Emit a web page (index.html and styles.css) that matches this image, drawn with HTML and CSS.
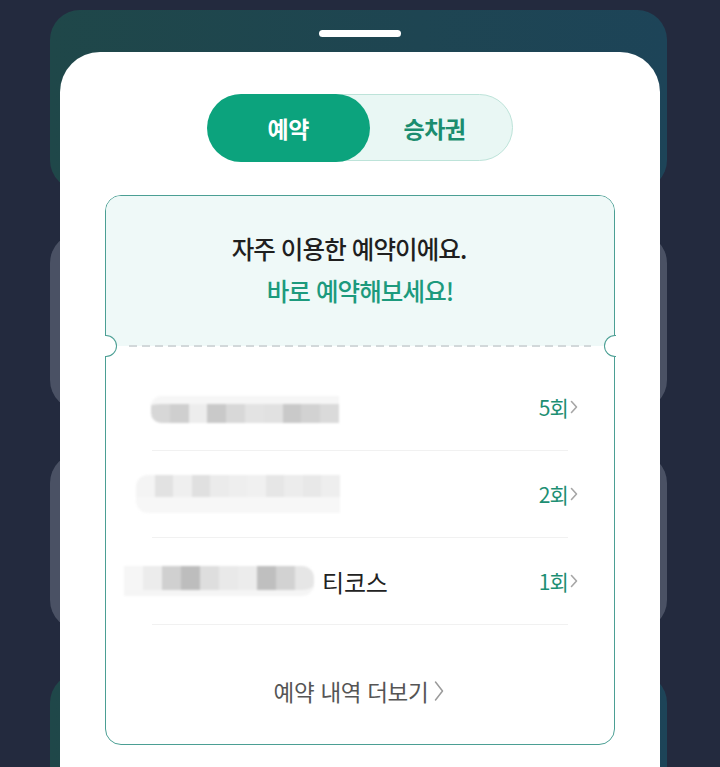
FILE: index.html
```html
<!DOCTYPE html>
<html lang="ko">
<head>
<meta charset="utf-8">
<title>자주 이용한 예약</title>
<link rel="stylesheet" href="styles.css">
</head>
<body>
<div class="screen">
  <div class="bg-list">
    <div class="bg-card teal"></div>
    <div class="bg-card grey"></div>
    <div class="bg-card grey"></div>
    <div class="bg-card teal tall"></div>
  </div>

  <div class="overlay">
    <div class="handle"></div>
    <div class="sheet">
      <div class="toggle">
        <div class="tab active">예약</div>
        <div class="tab">승차권</div>
      </div>

      <div class="ticket">
        <div class="ticket-head">
          <p class="head-1">자주 이용한 예약이에요.</p>
          <p class="head-2">바로 예약해보세요!</p>
          <div class="dash"></div>
        </div>
        <span class="notch left"></span>
        <span class="notch right"></span>

        <ul class="rows">
          <li class="row">
            <span class="name">
              <span class="mosaic m1" aria-hidden="true">
                <i class="c1"></i><i class="c2"></i><i class="c3"></i><i class="c4"></i><i class="c5"></i><i class="c6"></i><i class="c7"></i><i class="c8"></i><i class="c9"></i><i class="c10"></i>
              </span>
            </span>
            <span class="count">5회<svg class="chev" viewBox="0 0 8 14" width="8" height="14"><path d="M1.5 1.5 L6.5 7 L1.5 12.5"/></svg></span>
          </li>
          <li class="row">
            <span class="name">
              <span class="mosaic m2" aria-hidden="true">
                <i class="c1"></i><i class="c2"></i><i class="c3"></i><i class="c4"></i><i class="c5"></i><i class="c6"></i><i class="c7"></i><i class="c8"></i><i class="c9"></i><i class="c10"></i><i class="c11"></i>
              </span>
            </span>
            <span class="count">2회<svg class="chev" viewBox="0 0 8 14" width="8" height="14"><path d="M1.5 1.5 L6.5 7 L1.5 12.5"/></svg></span>
          </li>
          <li class="row">
            <span class="name">
              <span class="mosaic m3" aria-hidden="true">
                <i class="c1"></i><i class="c2"></i><i class="c3"></i><i class="c4"></i><i class="c5"></i><i class="c6"></i><i class="c7"></i><i class="c8"></i><i class="c9"></i><i class="c10"></i>
              </span>
              <span class="name-text">티코스</span>
            </span>
            <span class="count">1회<svg class="chev" viewBox="0 0 8 14" width="8" height="14"><path d="M1.5 1.5 L6.5 7 L1.5 12.5"/></svg></span>
          </li>
        </ul>

        <div class="more">예약 내역 더보기<svg class="chev big" viewBox="0 0 10 22" width="10" height="22"><path d="M1.5 2 L8.5 11 L1.5 20"/></svg></div>
      </div>
    </div>
  </div>
</div>
</body>
</html>
```

FILE: styles.css
```css
* { box-sizing: border-box; }
html, body { margin: 0; padding: 0; }
body {
  width: 720px;
  height: 767px;
  overflow: hidden;
  background: #232a3e;
  font-family: "Noto Sans CJK KR", "Noto Sans", sans-serif;
}
.screen {
  position: relative;
  width: 720px;
  height: 767px;
  overflow: hidden;
}

/* background list of cards */
.bg-list {
  display: flex;
  flex-direction: column;
  gap: 43px;
  padding: 10px 53px 0 50px;
}
.bg-card {
  height: 177px;
  border-radius: 30px;
}
.bg-card.teal {
  height: 180px;
  background: linear-gradient(90deg, #1f4749 0%, #1e4552 60%, #1d4458 100%);
}
.bg-card.grey { background: #4a5164; }
.bg-card.tall { height: 200px; }

/* bottom sheet overlay */
.overlay {
  position: absolute;
  top: 30px;
  left: 60px;
  width: 600px;
}
.handle {
  width: 82px;
  height: 7px;
  margin: 0 auto 15px;
  border-radius: 4px;
  background: #ffffff;
}
.sheet {
  height: 715px;
  background: #ffffff;
  border-radius: 40px 40px 0 0;
  padding-top: 42px;
}

/* toggle */
.toggle {
  display: grid;
  grid-template-columns: 161px 1fr;
  width: 305px;
  height: 67px;
  margin: 0 auto;
  border: 1.5px solid #bde3d9;
  border-radius: 34px;
  background: #e9f7f4;
}
.tab {
  display: flex;
  align-items: center;
  justify-content: center;
  font-size: 23px;
  font-weight: 700;
  color: #1b8d6f;
  padding-right: 12px;
  letter-spacing: -0.5px;
}
.tab.active {
  margin: -1.5px 0 -1.5px -1.5px;
  padding-right: 0;
  background: #0ca37d;
  color: #ffffff;
  border-radius: 34px;
}

/* ticket */
.ticket {
  position: relative;
  width: 510px;
  height: 550px;
  margin: 34px auto 0;
  border: 1.5px solid #4b9f94;
  border-radius: 16px;
}
.ticket-head {
  height: 149.5px;
  background: #eff9f8;
  border-radius: 15px 15px 0 0;
  padding-top: 32px;
  display: flex;
  flex-direction: column;
  align-items: center;
}
.ticket-head p {
  margin: 0;
  font-size: 24.5px;
  line-height: 42px;
  letter-spacing: -0.9px;
}
.head-1 { color: #1f1f1f; font-weight: 500; padding-right: 22px; }
.head-2 { color: #1c9a7d; font-weight: 500; }
.dash {
  align-self: stretch;
  margin: auto 23px -1px;
  height: 2px;
  background: repeating-linear-gradient(90deg, #d2d8da 0 8px, transparent 8px 13px);
}
.notch {
  position: absolute;
  top: 138.5px;
  width: 12px;
  height: 22px;
  background: #ffffff;
  border: 1.5px solid #4b9f94;
}
.notch.left {
  left: -1.5px;
  border-left: 0;
  border-radius: 0 11px 11px 0;
}
.notch.right {
  right: -1.5px;
  border-right: 0;
  border-radius: 11px 0 0 11px;
}

/* rows */
.rows {
  list-style: none;
  margin: 18px 36px 0 30px;
  padding: 0;
}
.row {
  height: 87px;
  display: flex;
  align-items: center;
  justify-content: space-between;
  background-image: linear-gradient(#f1f1f1, #f1f1f1);
  background-size: calc(100% - 26px) 1px;
  background-position: 16px 100%;
  background-repeat: no-repeat;
}
.name {
  display: flex;
  align-items: center;
  font-size: 24px;
  color: #222;
}
.name-text {
  margin-left: 8px;
  letter-spacing: -0.2px;
}
.mosaic {
  display: grid;
  grid-auto-flow: column;
  grid-auto-columns: 18.8px;
  filter: blur(1.2px);
}
.mosaic i { display: block; }
.m1 { margin-left: 15px; height: 27px; margin-top: 4px; }
.m1 i { border-top: 8px solid #f6f6f6; }
.m1 .c1 { background: #d7d7d7; border-radius: 10px 0 0 10px; }
.m1 .c2 { background: #cfcfcf; }
.m1 .c3 { background: #ededed; }
.m1 .c4 { background: #c9c9c9; }
.m1 .c5 { background: #d8d8d8; }
.m1 .c6 { background: #e3e3e3; }
.m1 .c7 { background: #e1e1e1; }
.m1 .c8 { background: #c9c9c9; }
.m1 .c9 { background: #d2d2d2; }
.m1 .c10 { background: #dadada; }

.m2 { margin-left: 0; height: 38px; grid-auto-columns: 18.5px; }
.m2 i { border-bottom: 16px solid #f7f7f7; }
.m2 .c1 { background: #f4f4f4; border-radius: 12px 0 0 12px; }
.m2 .c2 { background: #e2e2e2; }
.m2 .c3 { background: #efefef; }
.m2 .c4 { background: #e0e0e0; }
.m2 .c5 { background: #ebebeb; }
.m2 .c6 { background: #eeeeee; }
.m2 .c7 { background: #f0f0f0; }
.m2 .c8 { background: #e6e6e6; }
.m2 .c9 { background: #ececec; }
.m2 .c10 { background: #e8e8e8; }
.m2 .c11 { background: #eeeeee; }

.m3 { margin-left: -12px; height: 30px; grid-auto-columns: 19px; }
.m3 i { border-bottom: 6px solid #f5f5f5; }
.m3 .c1 { background: #f6f6f6; }
.m3 .c2 { background: #ececec; }
.m3 .c3 { background: #d0d0d0; }
.m3 .c4 { background: #bdbdbd; }
.m3 .c5 { background: #dedede; }
.m3 .c6 { background: #e9e9e9; }
.m3 .c7 { background: #ececec; }
.m3 .c8 { background: #bfbfbf; }
.m3 .c9 { background: #d2d2d2; }
.m3 .c10 { background: #e6e6e6; border-radius: 0 12px 12px 0; }

.count {
  display: flex;
  align-items: center;
  gap: 2px;
  font-size: 21px;
  color: #1d8f73;
  letter-spacing: -0.8px;
}
.chev {
  fill: none;
  stroke: #a6a6a6;
  stroke-width: 1.6;
  stroke-linecap: round;
  stroke-linejoin: round;
}

.more {
  display: flex;
  align-items: center;
  justify-content: center;
  gap: 6px;
  margin-top: 51px;
  height: 30px;
  font-size: 22.5px;
  color: #555555;
  letter-spacing: -0.3px;
  padding-right: 2px;
}
.chev.big { stroke: #9a9a9a; stroke-width: 1.5; }
```
